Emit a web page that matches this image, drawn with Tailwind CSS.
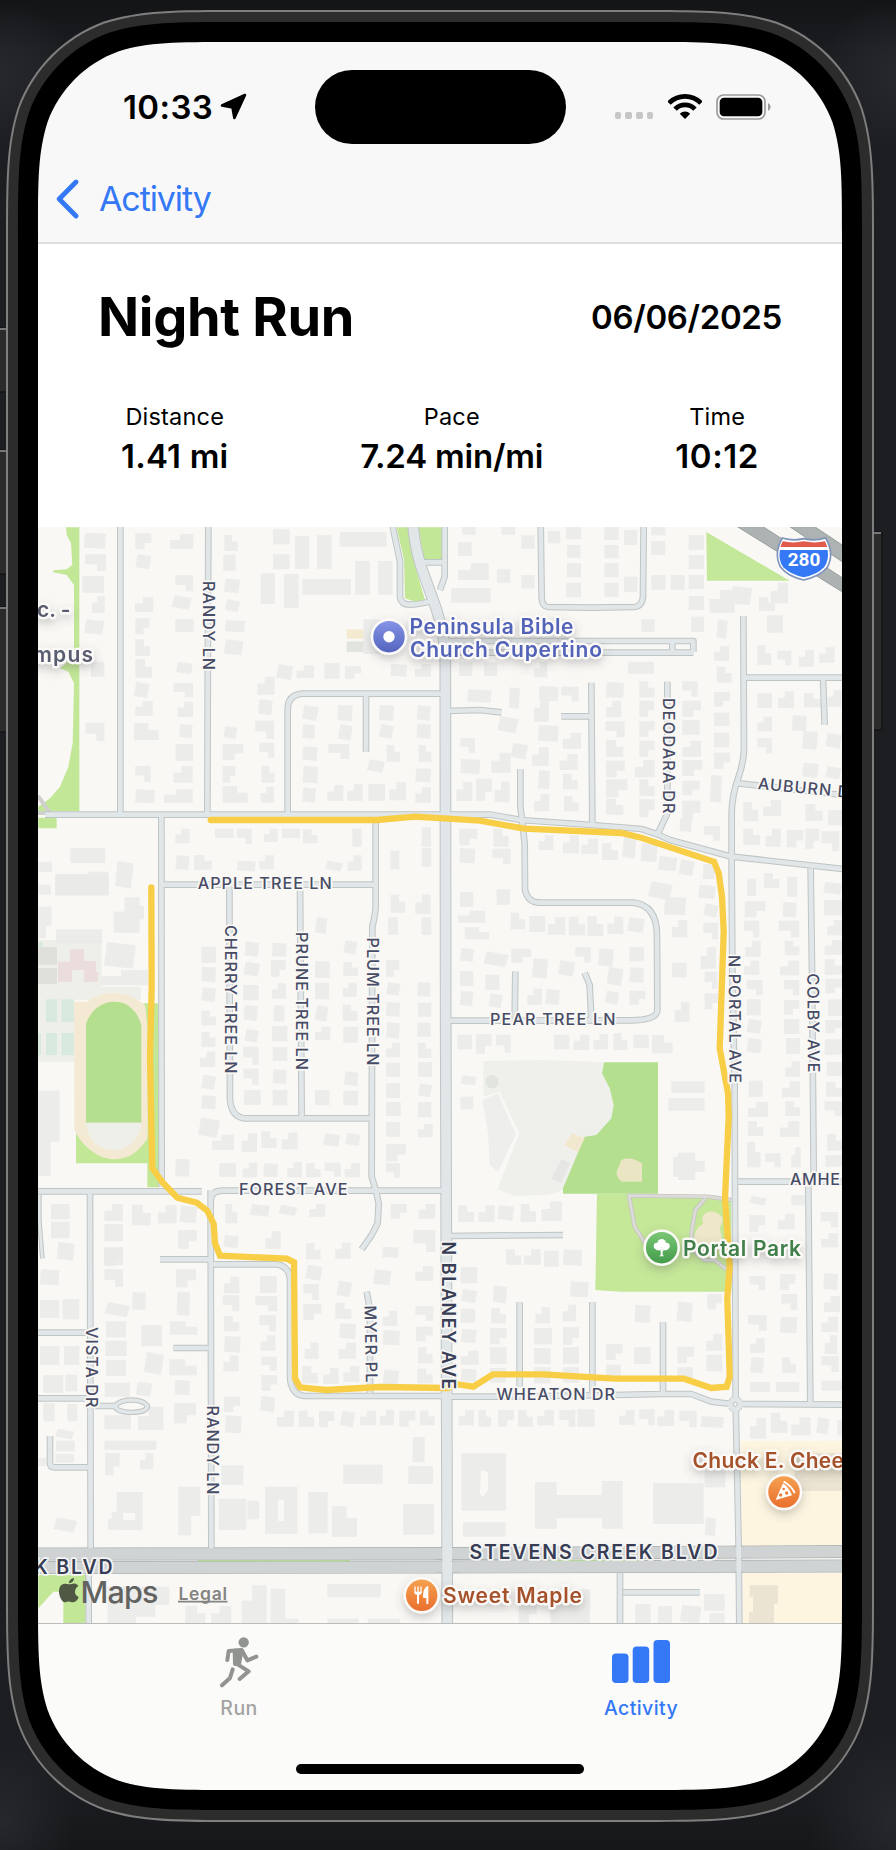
<!DOCTYPE html>
<html lang="en">
<head>
<meta charset="utf-8">
<title>Night Run</title>
<script src="https://cdn.jsdelivr.net/npm/@tailwindcss/browser@4"></script>
</head>
<body class="bg-[#1d1e22]">
<main class="relative h-[1850px] w-[896px] overflow-hidden bg-[#1d1e22] pt-[42px] pl-[38px] font-['Inter','Liberation_Sans',sans-serif] text-black">
  <svg class="absolute inset-0" width="896" height="1850" viewBox="0 0 896 1850" aria-hidden="true">
    <defs>
      <linearGradient id="edge" x1="0" y1="0" x2="0" y2="1"><stop offset="0" stop-color="#131416"/><stop offset="1" stop-color="#131416" stop-opacity="0"/></linearGradient>
      <linearGradient id="edge2" x1="0" y1="1" x2="0" y2="0"><stop offset="0" stop-color="#161719"/><stop offset="1" stop-color="#161719" stop-opacity="0"/></linearGradient>
      <radialGradient id="lit"><stop offset="0" stop-color="#27282d"/><stop offset="1" stop-color="#27282d" stop-opacity="0"/></radialGradient>
    </defs>
    <rect width="896" height="60" fill="url(#edge)"/>
    <rect y="1770" width="896" height="80" fill="url(#edge2)"/>
    <circle cx="0" cy="75" r="75" fill="url(#lit)"/><circle cx="896" cy="75" r="75" fill="url(#lit)"/>
    <circle cx="0" cy="1820" r="75" fill="url(#lit)"/><circle cx="896" cy="1820" r="90" fill="url(#lit)"/>
    <g fill="#2b2b2b" stroke="#0b0b0c">
      <rect x="-4" y="328" width="11" height="64"/><rect x="-4" y="450" width="11" height="124"/><rect x="-4" y="607" width="11" height="125"/>
      <rect x="873" y="532" width="9" height="198" rx="2"/>
    </g>
    <g fill="#777"><rect y="328" width="6" height="2"/><rect y="450" width="6" height="2"/><rect y="607" width="6" height="2"/><rect x="874" y="532" width="7" height="2"/></g>
    <path id="rim" fill="#7f7f7f"/><path id="band" fill="#2c2c2c"/>
  </svg>

  <section class="relative flex h-[1748px] w-[804px] flex-col overflow-hidden rounded-[100px] bg-white">
    <header class="h-[202px] shrink-0 border-b-2 border-[#dedede] bg-[#f8f8f8] pt-[27px]">
      <div class="flex h-[75px] items-center">
        <div class="flex w-[276.500px] items-center pl-[85px]">
          <span class="w-[97px] text-[33px] leading-[40px] font-semibold tracking-[0.4px]">10:33</span>
          <svg width="27" height="27" viewBox="0 0 27 27"><path d="M2 12.500 25 2 14.400 25 12.500 14.400Z" stroke="#000" stroke-width="2.600" stroke-linejoin="round"/></svg>
        </div>
        <div class="h-[74px] w-[251px] rounded-full bg-black"></div>
        <div class="flex flex-1 items-center pl-[49px]">
          <div class="mt-[18px] flex gap-[4px]">
            <i class="size-[6.7px] rounded-[2px] bg-[#c6c6c6]"></i><i class="size-[6.7px] rounded-[2px] bg-[#c6c6c6]"></i><i class="size-[6.7px] rounded-[2px] bg-[#c6c6c6]"></i><i class="size-[6.7px] rounded-[2px] bg-[#c6c6c6]"></i>
          </div>
          <svg class="ml-[15px]" width="34" height="25" viewBox="0 0 101 74"><path d="M3 27A66.500 66.500 0 0 1 98 27M21 45A41 41 0 0 1 80 45" fill="none" stroke="#000" stroke-width="14"/><path d="M50.500 74 35 58.500A22 22 0 0 1 66 58.500Z"/></svg>
          <svg class="ml-[14px]" width="55" height="26" viewBox="0 0 165 78"><rect x="3" y="3" width="144" height="72" rx="20" fill="none" stroke="#9a9a9a" stroke-width="5"/><rect x="11" y="11" width="128" height="56" rx="13"/><path d="M156 27q8 4 8 12t-8 12z" fill="#9a9a9a"/></svg>
        </div>
      </div>
      <div class="mt-[34px] flex h-[42px] items-center pl-[18px] text-[#3478f6]">
        <svg width="24" height="40" viewBox="0 0 24 40" fill="none" stroke="currentColor" stroke-width="4.800" stroke-linecap="round" stroke-linejoin="round"><path d="M20 3 3.200 20 20 37"/></svg>
        <span class="ml-[19px] text-[34px] leading-[42px] tracking-[-1.1px]">Activity</span>
      </div>
    </header>

    <div class="h-[283px] shrink-0 px-[60px] pt-[40px]">
      <div class="flex items-center justify-between">
        <h1 class="text-[54px] leading-[66px] font-bold tracking-[-0.3px]">Night Run</h1>
        <time class="text-[33px] leading-[66px] font-semibold tracking-[-0.35px]">06/06/2025</time>
      </div>
      <dl class="mt-[51px] flex justify-between px-[23px] text-center">
        <div><dt class="text-[23.500px] leading-[32px] tracking-[0.2px]">Distance</dt><dd class="mt-px text-[33px] leading-[44px] font-semibold tracking-[0.2px]">1.41 mi</dd></div>
        <div><dt class="text-[23.500px] leading-[32px] tracking-[0.2px]">Pace</dt><dd class="mt-px text-[33px] leading-[44px] font-semibold tracking-[-0.2px]">7.24 min/mi</dd></div>
        <div><dt class="text-[23.500px] leading-[32px] tracking-[0.2px]">Time</dt><dd class="mt-px text-[33px] leading-[44px] font-semibold tracking-[0.6px]">10:12</dd></div>
      </dl>
    </div>

    <svg class="block shrink-0" width="804" height="1096" viewBox="38 527 804 1096" font-family="Inter, 'Liberation Sans', sans-serif">
      <defs>
        <linearGradient id="blue" x1="0" y1="0" x2="0" y2="1"><stop stop-color="#8796e8"/><stop offset="1" stop-color="#5262bd"/></linearGradient>
        <linearGradient id="green" x1="0" y1="0" x2="0" y2="1"><stop stop-color="#7cc878"/><stop offset="1" stop-color="#419a48"/></linearGradient>
        <linearGradient id="orange" x1="0" y1="0" x2="0" y2="1"><stop stop-color="#f5a351"/><stop offset="1" stop-color="#e96d2c"/></linearGradient>
        <filter id="soft" x="-50%" y="-50%" width="200%" height="200%"><feDropShadow dx="0" dy="4" stdDeviation="5" flood-color="#555" flood-opacity=".3"/></filter>
      </defs>
      <rect x="38" y="527" width="804" height="1096" fill="#f9f8f5"/>

      <!-- land cover -->
      <g transform="translate(0 510) scale(.33333)" fill="#c2e797">
        <path d="M198 52H238V903H115V890L150 865 180 830 205 770 218 700 222 520 205 485 180 475 222 440V225L200 195 160 187V181L200 178 217 165 213 100 200 75ZM115 923H170V955H115ZM1190 52H1225L1240 150 1275 270 1245 275 1215 265 1212 150ZM1255 52H1330V148H1272Z"/>
        <path d="M1040 358h50v28h-50z" fill="#f3ead0"/><path d="M1040 394h50v32h-50z" fill="#e2e4de"/>
      </g>
      <path transform="translate(448 510) scale(.33333)" fill="#c4e89a" d="M775 66 1025 212H777Z"/>
      <g transform="translate(0 870) scale(.33333)">
        <path fill="#efefea" d="M115 210H305V350H423V390H222V575H115Z"/>
        <path fill="#d8eade" d="M138 388h33v68h-33zM184 388h38v68h-38zM138 489h33v67h-33zM184 489h38v67h-38zM115 489h8v67h-8zM115 216h12v14h-12z"/>
        <path fill="#dfdfdc" d="M115 231h56v53h-56zM115 294h56v48h-56z"/>
        <path fill="#eadddc" d="M210 238h42v35h36v33h6v30h-42v-36h-36v36h-42v-61h36z"/>
        <path fill="#c2e797" d="M430 400H475L478 952H442V880H228V780H440Z"/>
        <path fill="#f4ead3" d="M222 395H262C290 376 310 369 345 369S400 380 435 405L443 470V805C420 840 390 868 345 868S250 835 223 780Z"/>
        <path fill="#b3df8f" d="M258 758V462C270 425 300 395 343 395S412 425 424 465V758Z"/>
        <path fill="#efefea" d="M258 758H424C420 805 390 840 342 840S264 810 258 758Z"/>
      </g>
      <g transform="translate(448 870) scale(.33333)">
        <path fill="#efefeb" d="M106 573 290 570 468 577 462 610 485 655 497 705 490 745 445 795 410 800 345 960 300 974 200 978 148 958 214 790 155 665 106 680Z"/>
        <path fill="#eeeeec" d="M103 690 150 670 178 735 205 792 150 905 125 885 120 790Z"/>
        <circle cx="132" cy="635" r="20" fill="#e2e4de"/>
        <path fill="#b3df8f" d="M468 577H630V971H345V955L410 800 445 795 490 745 497 705 485 655 462 610Z"/>
        <path fill="#f2e8d0" d="M372 790 410 804 390 846 349 826Z"/><path fill="#e6e6e4" d="M340 868 366 880 340 938 310 926Z"/>
        <path fill="#eae5c3" d="M520 870Q550 858 582 880V935H520Q500 915 508 900Z"/>
        <path fill="#c4e798" d="M447 972H630L850 988V1265L520 1265 442 1260Z"/>
        <path fill="#efe7c9" d="M762 1045Q770 1020 800 1026 830 1035 822 1062 810 1070 822 1100V1140H740Q730 1080 765 1062Z"/>
      </g>
      <path transform="translate(0 1230) scale(.33333)" fill="#c2e797" d="M115 1035H258L256 1182H190V1085H160L115 1135Z"/>
      <g transform="translate(448 1230) scale(.33333)"><path fill="#fdf5e0" d="M878 632H1182V948H882ZM885 1030H1182V1182H885Z"/><path fill="#ece4d2" d="M1040 670H1182V783H1040ZM905 1066H990V1120L978 1122V1182H903V1145H915V1100H905Z"/></g>

      <!-- buildings -->
      <g id="houses" fill="#e9e9e8" fill-opacity=".82"></g>
      <path fill="#f9f8f5" d="M481 1470 488 1472V1490L483 1497 480 1494ZM278 1500h6v21h-6zM123 1513h12v7h-12z"/>

      <!-- park paths -->
      <g transform="translate(448 870) scale(.33333)" fill="none" stroke-linejoin="round">
        <path stroke="#c5c5c2" stroke-width="13" d="M850 990 780 980 543 977 560 1070 595 1125M772 985 742 1020 730 1090 735 1140 770 1170 800 1170 835 1198"/>
        <path stroke="#dcdbd8" stroke-width="8" d="M850 990 780 980 543 977 560 1070 595 1125M772 985 742 1020 730 1090 735 1140 770 1170 800 1170 835 1198"/>
      </g>
      <path d="M38 796 50 813M38 813H50" stroke="#cfd0ce" stroke-width="4"/>

      <!-- streets -->
      <g id="streets" fill="none" stroke-linejoin="round"></g>
      <circle cx="735.300" cy="1404.300" r="7.500" fill="#e1e6e8"/>
      <path d="M728.800 1400.500a7.500 7.500 0 0 1 3.200-3.200M738.600 1397.300a7.500 7.500 0 0 1 3.200 3.200M728.800 1408.100a7.500 7.500 0 0 0 3.200 3.200M738.600 1411.300a7.500 7.500 0 0 0 3.200-3.200" fill="none" stroke="#c2c7c7"/>
      <circle cx="735.300" cy="1404.300" r="2" fill="#f9f8f5" stroke="#b9bebe"/>
      <g transform="translate(448 510) scale(.33333)" fill="#adb3b3" stroke="#999f9f" stroke-width="3">
        <path d="M868 50H945L1190 208V250ZM1025 50H1100L1190 110V160Z"/>
      </g>

      <!-- recorded route -->
      <path fill="none" stroke="#f8ce46" stroke-width="6.300" stroke-linecap="round" stroke-linejoin="miter" d="M210.700 820H376.700L415 816.700 448 818.700 479.700 820.700 524.700 828.700 621.300 833 641.300 837.700 714 861.700 718.700 873.300 722 896.700 723.700 931.700 719.700 1048.300 728 1093.300 728.700 1116.700 725 1198.300 729.700 1266.700 727.300 1298.300 729.700 1376.700 726.700 1386.700 711.300 1388 684 1378.700H614.700L543 1374.300H493L473.300 1386.700 455 1384 448 1388 380 1387 326 1390 300 1387.300 295 1378.300 294 1262.300 286.700 1258.700 220 1255.700 215 1243.300 213.700 1224 207.300 1210.700 196.700 1202.700 177.300 1197.700 163.300 1183.300 152.300 1168.300 150 1056.700 151.700 986.700 151.300 887.300"/>

      <!-- street names -->
      <g fill="#474c66" font-size="16.200" font-weight="450" stroke="#f9f8f5" stroke-width="3.500" paint-order="stroke" stroke-linejoin="round">
        <text transform="translate(203.300 581) rotate(90)" textLength="89">RANDY LN</text>
        <text x="197.700" y="889.300" textLength="134">APPLE TREE LN</text>
        <text transform="translate(225 925) rotate(90)" textLength="148.500">CHERRY TREE LN</text>
        <text transform="translate(296 932) rotate(90)" textLength="138">PRUNE TREE LN</text>
        <text transform="translate(367 937.500) rotate(90)" textLength="128">PLUM TREE LN</text>
        <text x="239" y="1195.300" textLength="108.500">FOREST AVE</text>
        <text transform="translate(663 698) rotate(90)" textLength="115.500">DEODARA DR</text>
        <text transform="translate(757.500 789) rotate(5.500)" textLength="103">AUBURN DR</text>
        <text transform="translate(728.500 955) rotate(89.500)" textLength="128">N PORTAL AVE</text>
        <text transform="translate(807.200 973.500) rotate(89.500)" textLength="99">COLBY AVE</text>
        <text x="490" y="1024.700" textLength="125.500">PEAR TREE LN</text>
        <text x="790" y="1185.300" textLength="50">AMHE</text>
        <text transform="translate(86 1327) rotate(90)" textLength="80.500">VISTA DR</text>
        <text transform="translate(364.500 1305.500) rotate(89)" textLength="77">MYER PL</text>
        <text transform="translate(206.700 1405.500) rotate(90)" textLength="89">RANDY LN</text>
        <text x="496.500" y="1400.300" textLength="118.500">WHEATON DR</text>
      </g>
      <g fill="#383d56" font-weight="600" stroke="#f5f5f3" stroke-width="3.500" paint-order="stroke" stroke-linejoin="round">
        <text transform="translate(442.300 1241.500) rotate(90)" textLength="148" font-size="18">N BLANEY AVE</text>
        <text x="469.500" y="1558.500" textLength="248" font-size="19.500">STEVENS CREEK BLVD</text>
        <text x="34" y="1573.500" textLength="78.500" font-size="19.500">K BLVD</text>
      </g>

      <!-- places -->
      <g font-weight="600" font-size="21" stroke="#fbfaf8" stroke-width="4.500" paint-order="stroke" stroke-linejoin="round" filter="url(#soft)">
        <g fill="#5264b8"><text x="409.500" y="634" textLength="164">Peninsula Bible</text><text x="410" y="656.700" textLength="192">Church Cupertino</text></g>
        <g fill="#5a5c70"><text x="37" y="616.700" textLength="33.500">c. -</text><text x="33" y="661.700" textLength="60">mpus</text></g>
        <text x="683" y="1256" textLength="118" fill="#3f7f49">Portal Park</text>
        <text x="692.500" y="1467.700" textLength="176" fill="#a5512a">Chuck E. Cheese</text>
        <text x="443" y="1602.700" textLength="139" fill="#a5512a">Sweet Maple</text>
      </g>
      <g stroke="#fbfaf8" stroke-width="2.500" filter="url(#soft)">
        <circle cx="389" cy="636.700" r="17" fill="url(#blue)"/>
        <circle cx="661.700" cy="1247.700" r="17" fill="url(#green)"/>
        <circle cx="784" cy="1492" r="17" fill="url(#orange)"/>
        <circle cx="421.700" cy="1595.300" r="17" fill="url(#orange)"/>
      </g>
      <circle cx="389" cy="636.700" r="5.700" fill="#fff"/>
      <g transform="translate(661.700 1247.700) scale(.33333)" fill="#fff"><circle cx="0" cy="-13" r="13"/><circle cx="-14" cy="-5" r="10"/><circle cx="14" cy="-5" r="10"/><ellipse cx="-10" cy="2" rx="9" ry="6"/><ellipse cx="10" cy="2" rx="9" ry="6"/><path d="M-2.500 0H2.500L3 22 8 26H-8L-3 22Z"/><path d="M0 12 9 4M0 12-9 4" stroke="#fff" stroke-width="2.500"/></g>
      <g transform="translate(784 1492) scale(.33333)"><path fill="#fff" d="M-3-26-24 22Q-22 26-18 22L24 10Q14-14-3-26Z"/><path fill="none" stroke="#fff" stroke-width="6" stroke-linecap="round" d="M1-30Q22-18 31 1"/><circle cx="-10" cy="9" r="5" fill="#ee7d36"/><circle cx="8" cy="3" r="5" fill="#ee7d36"/><circle cx="-1" cy="-9" r="4" fill="#ee7d36"/></g>
      <g transform="translate(421.700 1595.300) scale(.33333)" fill="none" stroke="#fff" stroke-linecap="round"><path stroke-width="4" d="M-20-25V-9M-11-25V-9M-2-25V-9"/><path d="M-20-9Q-20-3-11-3T-2-9Z" fill="#fff" stroke-width="4"/><path stroke-width="6" d="M-11-2V23"/><path d="M17-25V24M17-24Q6-18 7 5H17Z" fill="#fff" stroke-width="6" stroke-linejoin="round"/></g>

      <!-- interstate shield -->
      <g transform="translate(448 510) scale(.33333)">
        <path d="M1003 84Q1035 94 1067 86 1100 94 1133 84 1160 130 1138 172 1115 200 1067 210 1020 200 998 172 976 130 1003 84Z" fill="#fff" stroke="#7f92ba" stroke-width="5"/>
        <path d="M1004 94Q1035 101 1067 94 1100 101 1131 94L1138 111H997Z" fill="#e15b4d"/>
        <path d="M996 120H1139Q1144 150 1128 172 1108 194 1067 202 1028 194 1006 172 990 150 996 120Z" fill="#3478f6"/>
        <text x="1068" y="169" text-anchor="middle" font-size="57" font-weight="700" fill="#fff" font-family="Roboto,sans-serif">280</text>
      </g>

      <!-- map attribution -->
      <g transform="translate(0 1230) scale(.33333)" fill="#4f5843"><path d="M207 1063C216 1063 225 1055 235 1068 221 1078 222 1095 236 1101 230 1116 222 1117 215 1117 208 1114 203 1114 196 1117 183 1119 168 1080 184 1065 194 1058 200 1062 207 1063Z"/><path d="M206 1060Q208 1046 222 1044 222 1058 206 1060Z"/></g>
      <text x="80.500" y="1602.700" font-size="30.500" font-weight="500" fill="#626260" textLength="78">Maps</text>
      <text x="178.500" y="1599.500" font-size="17.500" font-weight="600" fill="#848482" textLength="48.500">Legal</text><path d="M178 1601.700H227.500" stroke="#848482" stroke-width="1.700"/>
    </svg>

    <nav class="relative flex h-[167px] shrink-0 border-t border-[#bcbcba] bg-[#fbfbf9]">
      <div class="flex flex-1 flex-col items-center pt-[12px] text-[#929490]">
        <svg width="40" height="52" viewBox="656 136 120 156" fill="none" stroke="currentColor" stroke-width="12" stroke-linecap="round" stroke-linejoin="round"><circle cx="730" cy="155" r="15.500" fill="currentColor" stroke="none"/><path d="M681 208 685 181 724 178 741 209 768 198M713 222 745 242 718 265M697 236 689 262 665 284"/><path d="M703 180H724L716 220H704Z" fill="currentColor"/></svg>
        <span class="mt-[8px] text-[19.500px] leading-[24px] font-medium tracking-[0.4px] text-[#a3a3a2]">Run</span>
      </div>
      <div class="flex flex-1 flex-col items-center pt-[12px] text-[#3478f6]">
        <svg width="60" height="52" viewBox="0 0 60 52" fill="currentColor"><rect x="1" y="17.500" width="16.500" height="29.500" rx="4"/><rect x="21.700" y="10.500" width="16.500" height="36.500" rx="4"/><rect x="42.500" y="4" width="16.500" height="43" rx="4"/></svg>
        <span class="mt-[8px] text-[19.500px] leading-[24px] font-medium tracking-[0.4px]">Activity</span>
      </div>
      <div class="absolute bottom-[16px] left-[258px] h-[10px] w-[288px] rounded-full bg-black"></div>
    </nav>
  </section>
  <svg class="pointer-events-none absolute inset-0" width="896" height="1850" viewBox="0 0 896 1850" aria-hidden="true"><path id="bezel" fill="#000" fill-rule="evenodd"/></svg>
</main>
<script>
// Rounded rectangle with continuous-curvature corners.
function squircle(x, y, w, h, r) {
  const a = 1.5287 * r, b = 1.0885 * r, c = .8684 * r, d = .6315 * r, e = .0749 * r, f = .3728 * r, g = .1691 * r;
  const X = x + w, Y = y + h;
  return `M${x + a} ${y}H${X - a}C${X - b} ${y} ${X - c} ${y} ${X - d} ${y + e}C${X - f} ${y + g} ${X - g} ${y + f} ${X - e} ${y + d}C${X} ${y + c} ${X} ${y + b} ${X} ${y + a}V${Y - a}` +
    `C${X} ${Y - b} ${X} ${Y - c} ${X - e} ${Y - d}C${X - g} ${Y - f} ${X - f} ${Y - g} ${X - d} ${Y - e}C${X - c} ${Y} ${X - b} ${Y} ${X - a} ${Y}H${x + a}` +
    `C${x + b} ${Y} ${x + c} ${Y} ${x + d} ${Y - e}C${x + f} ${Y - g} ${x + g} ${Y - f} ${x + e} ${Y - d}C${x} ${Y - c} ${x} ${Y - b} ${x} ${Y - a}V${y + a}` +
    `C${x} ${y + b} ${x} ${y + c} ${x + e} ${y + d}C${x + g} ${y + f} ${x + f} ${y + g} ${x + d} ${y + e}C${x + c} ${y} ${x + b} ${y} ${x + a} ${y}Z`;
}
const $ = id => document.getElementById(id);
$('rim').setAttribute('d', squircle(6, 10, 868, 1812, 155));
$('band').setAttribute('d', squircle(8, 12, 864, 1808, 153));
$('bezel').setAttribute('d', squircle(18, 22, 844, 1788, 144) + squircle(38, 42, 804, 1748, 127));

// Street centre lines per map tile: [tile x, tile y, total width, path], three units per pixel.
const streets = [
  [0, 510, 20, 'M361 40V910M625 40 622 910M484 915 485 2030M484 1124H1127M688 1124 690 1770Q695 1822 735 1825H1117M900 1124 905 1825M1127 925V1185Q1127 1210 1117 1250L1115 2000 1128 2042 1136 2080 1133 2140 1115 2175 1085 2218M863 910V600Q863 553 910 551H1330M1098 551V725'],
  [0, 510, 20, 'M135 914H1344L1474 914 1562 930 1777 945 1924 957 1970 972 2010 990 2195 1040 2540 1078'],
  [0, 510, 20, 'M1176 40 1200 155V262Q1204 284 1230 284 1255 284 1290 274M1260 157H1334M1334 40V200L1320 240'],
  [448, 510, 20, 'M278 40 281 265Q283 290 300 291L430 293 560 291Q582 288 585 262L587 40M0 393H736V425M0 428H736M673 393V428M0 603 95 600 160 607M430 518 433 940M340 619H430M217 777V890L222 930 230 1000 231 1140Q240 1178 275 1178H555Q628 1185 627 1280L628 1500Q628 1530 550 1531L0 1532M658 515V910L630 970M886 318 888 720Q886 760 872 800 850 860 851 920V1080L853 1380 860 1730 863 2683 872 3110 874 3350M886 503H1200M1125 503 1130 645M872 820 1200 857M1088 1075 1092 1380 1097 1990M1081 2025 1087 2683M870 2015H1200M202 1385 200 1530M410 1388 425 1425 430 1530M0 2178 345 2175'],
  [0, 1230, 20, 'M115-116H605M632 60V-90Q634-118 668-118H1330M270-115 272 955M632-120 634 955M480 88H630M640 103H830Q868 108 870 150V440Q872 495 915 498H1330M520 354H625M100 308H265M100 505H265M285 528H345M150 618V700Q150 712 165 712H270M1100 185 1110 240V490M266 1030V1200'],
  [0, 1230, 16, 'M345 528Q360 510 395 510T443 528Q440 547 395 547T345 528Z'],
  [0, 1230, 14, 'M118-105V-30L127 85'],
  [448, 1230, 20, 'M215 217V470M433 217V490M645 277V485M0 500H150L500 495 640 492H730L790 515 850 522 1200 524M516 1030V1200M526 1087H755'],
  [0, 510, 35, 'M1239 40Q1243 110 1265 175L1310 300Q1336 380 1336 460L1337 1500 1342 3350'],
];
const boulevard = 'M38 1554 448 1553.500 842 1551.500M38 1567.500 448 1567 842 1566';
const NS = 'http://www.w3.org/2000/svg';
function add(parent, d, stroke, width, t) {
  const p = document.createElementNS(NS, 'path');
  p.setAttribute('d', d); p.setAttribute('stroke', stroke); p.setAttribute('stroke-width', width);
  if (t) p.setAttribute('transform', t);
  parent.append(p);
}
const tf = (x, y) => `translate(${x} ${y}) scale(.33333)`;
streets.forEach(([x, y, w, d]) => add($('streets'), d, '#bfc4c4', w, tf(x, y)));
add($('streets'), boulevard, '#b1b6b6', 13);
add($('streets'), boulevard, '#cfd3d4', 11);
add($('streets'), 'M198 1560.700H350M550 1560.500H640', '#b5d69a', 1.5);
streets.forEach(([x, y, w, d]) => add($('streets'), d, '#e1e6e8', w - 6, tf(x, y)));
add($('streets'), 'M38 1554H435M460 1553.500 733 1552M745 1552 842 1551.500M38 1567.500H435M460 1567 733 1566.500M745 1566.500 842 1566', '#cfd3d4', 11);

// Building footprints: x,y,w,h and an optional corner cut (1 TL, 2 TR, 3 BR, 4 BL, 5 skewed).
const houses = [
  [0, 510, `252,68,66,48,5 255,133,63,50,4 247,198,65,50 276,258,38,50,1 253,328,60,46,5 273,455,40,45 257,638,56,55,4
    406,70,48,48,3 406,132,48,46,5 510,72,70,45,1 405,262,55,44,1 406,325,42,48,3 406,388,44,50,2 406,448,50,55,2 402,515,46,50,5 406,573,52,44,1 402,640,74,50,2 406,768,46,48,4 405,838,60,42,5
    526,196,53,48,4 515,256,60,43,5 526,328,55,38 528,456,50,36,5 521,520,58,42,4 533,575,46,46,1 538,642,40,43,5 527,702,52,50 520,768,58,50,1 492,838,86,40,1
    673,75,40,48,2 670,134,37,48 672,205,48,45,5 675,268,45,38,5 675,330,60,37,5 672,388,58,48,5 670,648,42,40,5 668,702,62,48,3 668,768,38,50,3 668,828,75,50,2
    819,58,50,45 819,133,50,45 885,78,43,98 951,76,44,100 1019,66,141,44 782,190,43,92 852,192,44,102 907,207,146,47 1066,153,44,101 1134,153,44,101 1090,328,50,104
    828,462,52,48,5 890,466,52,38,1 973,460,46,46 1035,468,48,38,3 772,500,52,54,1 774,568,44,48,5 766,632,56,54,4 778,698,45,46,4 784,768,40,50,2 782,830,40,48,1 1171,462,50,38,5 1245,462,48,38,1
    906,585,50,48,5 1012,585,46,48,5 906,642,40,45,5 1014,642,44,50,5 1137,585,45,47,5 1250,585,43,47,5 1137,642,44,45,5 1250,642,43,44,5 906,708,48,45,5 985,702,63,44,4 1160,705,40,50,2 1256,705,38,50,2 1101,748,54,40,5 908,768,46,52,5 906,832,42,46,5 982,826,48,46,1 1042,822,46,50,1 1105,822,50,50 1168,816,50,55,1 1246,775,47,42,5 1246,832,47,46,1
    526,956,43,44,1 645,956,56,28 711,956,44,46,4 792,956,41,40,1 846,956,54,28 909,958,44,42,2 1057,956,28,54 1265,952,28,58 526,1035,43,46,5 582,1035,54,44,2 711,1052,56,32,5 778,1036,44,42,1 975,1052,54,32,5 1043,1036,42,46,1 1171,1022,27,56 1265,1014,29,56
    211,1015,105,44 115,1055,41,30 115,1124,38,30 166,1092,160,64 264,1085,62,20 345,1052,56,84,5`],
  [448, 510, `43,50,40,24 161,50,40,24 30,96,41,42 220,76,40,40 10,234,118,44 30,160,92,50,1 147,178,40,40 220,195,40,40 299,64,38,36 354,52,46,36 357,105,40,38 357,160,42,42 354,218,45,44 469,52,43,38 469,105,43,40 469,160,43,42 469,218,43,42 528,60,40,45 528,200,40,46 610,52,43,24 610,93,42,42 610,195,43,44 668,195,42,44 722,76,46,43 722,135,46,42 722,195,46,42 722,258,46,42
    785,240,75,68,1 848,228,64,58,5 933,262,48,40,2 968,218,52,62,1 957,316,48,52 580,328,40,38 730,320,38,46 540,455,78,36 805,328,34,58,5 798,408,45,44,1 806,470,45,48,2 928,406,42,58,2 988,422,42,44,4 1052,420,46,50,1 1114,412,46,46,1
    33,456,40,42 108,456,40,42 258,456,40,46,1 57,538,74,40,5 182,532,34,64,5 258,565,44,70,1 272,528,60,46,5 340,530,52,44,4 148,618,64,52,5 270,645,62,50,5 345,668,54,48,1 37,684,44,44,4 37,746,60,46,5 130,728,58,60,1 188,698,52,50,5 252,712,50,56,1 25,815,48,58,1 84,806,48,66,3 140,815,45,62,1 270,780,36,58,5 258,852,46,52,1
    335,732,54,48,1 345,792,44,46,2 348,858,44,46,2 474,516,54,48,5 474,572,46,50,1 472,634,58,48,4 474,690,52,50,2 474,752,56,50,3 474,808,64,54,3 474,866,52,48,2 574,514,46,48,2 574,572,44,48,3 574,634,46,46,3 574,692,46,48,3 560,750,60,52,1 574,808,46,50,2 574,868,46,54,3 703,514,46,46,4 703,572,56,48,3 703,630,52,44 703,692,56,48,1 703,750,60,48,3 703,812,52,44,3 703,872,54,60,3
    798,546,48,44,3 798,608,46,40 798,668,46,44 798,728,48,48,3 786,794,36,84,5 768,948,48,44,4 695,925,36,40,5
    928,550,44,44 990,544,48,50,1 1068,550,50,42,2 928,620,44,44,1 928,684,44,46,4 1032,616,44,48,5 1062,662,48,58,5 1132,668,50,48,5 1140,540,40,50,1 1062,758,50,46,5 1132,768,48,40,5 886,876,44,58,2 946,870,54,48,1 1072,882,52,50,2 1140,900,42,46 886,956,50,48,2 952,956,46,54,1 1016,960,50,52,3 1072,956,42,60,3 1120,964,54,60,4
    34,956,54,50,3 136,956,46,54,2 272,976,44,44,1 34,1014,48,46,5 134,1016,54,46,4 345,976,48,54,1 400,986,50,46,1 462,1000,48,50,2 522,980,44,66,5 578,1000,50,56,5 630,1038,58,46,5 692,1048,48,50,5 764,1062,38,46,5`],
  [0, 870, `115,110,40,95,3 341,82,78,106,1 377,108,55,40 168,178,138,42 312,216,96,80,5 304,300,140,46,1 166,14,160,62 115,662,64,255,3
    604,230,44,48 604,290,44,46,5 604,352,44,44,5 604,422,44,44,2 604,486,42,44,2 600,545,46,46,1 604,614,44,46,5 604,676,44,42,5
    733,214,45,46,5 730,274,50,46,5 730,345,46,46 730,405,44,48,5 733,476,44,42,5 730,530,46,54,4 730,596,46,48,4 732,660,50,44
    816,218,44,42,5 813,270,44,50,3 816,340,42,46,1 820,405,34,50,5 816,468,46,46 818,532,44,40 818,598,42,44,5 818,660,44,46
    945,140,37,52,5 945,274,44,50 945,338,42,50 945,405,40,50,5 945,470,46,40,1 945,660,43,46 1030,210,42,44,5 1030,276,44,42,2 1028,338,42,42,1 1028,404,44,48,2 1030,470,44,48 1032,604,44,44,5 1030,662,44,44
    1172,74,44,54,2 1246,74,46,58,1 1164,142,30,52 1264,142,30,52 1158,270,40,50,3 1158,336,44,42,5 1158,396,42,44,5 1158,456,42,50,5 1158,518,42,44,1 1158,578,42,42 1158,640,42,44 1158,696,44,42 1158,756,42,44 1158,822,60,52,3 1158,880,42,44,4
    1252,336,40,44,5 1254,398,40,42 1252,458,40,42 1254,518,40,46,2 1254,576,42,44 1254,640,42,42,5 1254,696,40,46 1254,762,44,40,1
    594,742,66,62,5 636,794,66,46,1 725,790,46,56,1 784,784,46,50,2 845,788,48,50,1 970,790,50,40,5 1036,788,46,40,5 525,866,44,54,5 658,880,50,40 728,878,44,44,1 790,880,44,42,5 862,876,44,46,1 918,880,44,42,2 974,878,48,42,4 1034,880,46,42,1
    153,1002,56,46 153,1055,56,50 170,1116,54,56,5 313,1002,56,50,1 313,1062,56,52 313,1132,56,56,3 396,1004,56,62,2 474,1006,56,54,1 538,1006,54,54,5 534,1080,56,56,3 676,1002,36,58,2 750,1002,60,38,5 836,1004,56,34,5 928,1002,48,38,1 670,1094,46,40,5 796,1084,46,52,1 1172,1002,48,44,3 1256,1002,50,44,1 1240,1080,66,66,4 1146,1130,50,34,5 1006,1118,46,48,1 918,1120,44,48,2`],
  [448, 870, `36,66,40,44 146,58,40,46 30,122,82,36,1 50,172,74,36,2 188,128,44,50,2 244,138,48,48 300,142,52,52,1 362,140,50,56,2 418,138,48,60,2 478,140,48,52,1 538,142,52,46,5 600,34,74,56,5 648,80,66,56,5 672,150,46,52,1 672,278,44,44 680,396,44,60,1 750,44,54,44,5 766,100,46,42,5 766,158,44,50,4 758,232,46,64,1 770,305,38,52,4 770,370,40,48,3
    36,234,42,42,5 106,244,76,48,5 190,236,60,42,3 252,264,48,62,5 330,270,52,50,5 382,232,46,46,4 450,234,48,56,5 544,232,44,42 36,304,40,44 112,314,42,46 476,290,50,58,5 544,292,44,46,5 36,362,40,46,5 122,370,42,44,5 238,356,44,48,1 292,356,44,50,5 470,362,44,42,5 544,362,48,42,3
    28,494,44,44 84,492,46,60,3 144,494,44,54,4 318,494,46,44 376,494,48,46,1 436,492,44,46,1 496,490,42,50,2 556,494,46,40 612,496,62,54,2 38,616,48,30,5 38,680,38,38 670,634,100,34 661,684,109,38 690,848,52,82 675,860,17,60 742,873,28,32
    30,1006,48,50,2 92,1006,48,50,1 148,1006,50,46,5 218,1002,46,54,2 280,994,62,58,1
    898,26,26,52 948,10,46,44,2 1018,20,30,60 1126,36,56,38,5 890,94,62,48,3 1004,96,42,46,5 888,152,46,50,4 992,152,62,50,4 892,212,46,48,1 1010,212,44,44,2 888,272,46,42,1 996,272,58,44,1 896,330,48,46,4 1008,330,46,46,4 896,388,42,48 1008,390,46,44,3 896,446,46,46,5 1008,448,46,44 896,504,46,46,5 1014,504,42,48 1012,574,44,46,1 902,632,42,48 1002,634,54,48,1 900,696,60,44,1 1012,694,44,44,2 900,754,46,44,2 996,754,58,46,1 898,816,40,76,2 952,850,46,42,4 1030,832,28,60,1
    1128,90,54,46 1138,150,44,46,1 1130,210,52,44,1 1130,268,52,46,2 1132,326,50,44,3 1140,388,42,50 1132,450,50,40,3 1130,508,52,46 1136,576,46,42 1134,636,48,44,2 1130,694,52,44,4 1138,792,44,50,2 1132,856,50,34 904,978,52,28,5 1030,976,40,30 904,1036,48,50,3 990,1032,50,46,1 1118,1026,52,46,4 1120,1090,50,42,1`],
  [0, 1230, `120,118,58,48,5 120,210,58,54 188,208,50,60 313,53,56,52 313,118,56,52,4 313,216,78,46,5 396,186,42,54,5 424,285,62,64 432,366,60,68,5 318,274,60,48 316,332,64,46 318,390,60,48 314,458,76,42 408,456,48,44,5 120,348,58,56 192,348,46,56 130,436,60,52 196,434,36,50 130,520,34,54 202,522,30,52 165,596,58,32,5 168,632,56,32 166,672,56,26 115,684,24,24
    313,556,80,42 414,530,76,70,1 313,632,156,28 315,670,44,66,3 420,670,40,48,1 510,274,82,40,2 530,185,40,72,5 528,118,60,54,3 508,388,82,48,2 524,450,46,46,5 522,520,66,60,3 350,786,78,114 324,845,26,54,1 535,770,66,146,3 160,862,72,46,5
    672,140,46,50,1 668,196,50,48,4 672,258,46,46,2 672,318,50,50,5 670,376,46,48,1 672,500,48,46,3 675,556,50,54,5 780,138,50,50 766,198,66,46,4 778,256,50,48,4 782,316,44,46,1 784,380,46,42,4 784,436,48,46,3 780,498,46,48,5
    830,542,52,48,1 896,542,46,48,2 957,544,46,48,3 1020,542,46,50,5 1080,542,48,44,1 1140,540,42,46,1 1198,542,48,48,3 1260,542,44,44,2 664,706,66,58 656,806,83,94 742,812,36,56 795,770,97,142 925,786,58,124 996,828,75,92,2 1210,822,92,92 1225,708,74,54 1238,621,36,76 1030,704,118,57
    916,104,52,48,5 910,162,46,48,4 910,222,54,48,3 906,408,48,52,2 914,338,42,48,1 970,414,46,48,1 1030,408,48,48,1 1018,280,50,46,5 1006,218,48,48,2 1010,152,46,50,5 1016,338,52,48,1 1120,118,54,48,5 1148,242,44,46,1 1148,300,52,46,5 1148,418,50,48,5 1246,108,54,44,1 1246,228,54,44,4 1248,290,50,44,3 1254,352,44,48,2 1252,416,46,44,2
    323,1070,85,112 408,1070,100,90,3 556,1128,60,54,2 634,1128,60,54,1 725,1066,75,116,1 812,1076,44,106 856,1166,40,16 982,1062,160,40 982,1166,94,16 1103,1166,96,16`],
  [448, 1230, `174,58,46,46,2 228,58,50,46,1 288,62,44,48 345,58,58,50,5 38,112,50,48 38,176,50,44,5 38,236,44,42 38,296,48,44,5 38,362,54,42,1 38,416,48,40,5 134,166,44,54,5 130,234,44,46,2 126,295,50,48,3 126,352,50,50 126,414,48,44
    366,154,56,48,5 344,224,40,50,1 262,232,44,48,1 258,295,54,48 258,354,50,48 258,412,50,48 345,292,48,52,3 345,352,48,50 345,412,48,46 474,342,50,48,3 474,404,44,42 558,352,50,50 560,224,48,54,5 686,214,48,62,5 688,350,50,50,3 688,412,46,40 778,192,44,46,3 775,312,48,50,1 775,374,48,50
    32,540,46,46,1 92,540,38,50,2 150,540,48,50,3 210,540,44,50,2 268,540,50,46,1 334,540,48,50,4 388,538,52,52 514,540,46,44,1 574,538,46,48,4 628,540,50,48,1 694,542,52,50,4 758,558,70,36,5
    40,670,134,172 45,877,128,43 261,756,65,140 462,753,62,143 326,795,136,70 615,760,152,122 770,862,34,56,5 770,722,62,50 212,1110,54,72,3 308,1078,118,104 562,1122,46,60 630,1128,42,54 696,1124,64,56,5 768,1092,62,50 784,1150,46,32
    904,138,48,42,4 996,132,46,48,3 1126,130,44,50,5 1000,192,48,48,4 900,256,56,46,4 996,260,52,50,5 1120,260,50,46,1 906,324,44,44,1 1130,316,38,56,1 906,380,42,50,5 1002,382,42,46,2 1120,378,52,48,4 906,456,60,30 984,456,70,30 1120,452,62,30 1128,198,48,48,1
    906,564,48,62,1 968,548,50,60,2 1030,562,58,54,1 1104,562,40,52,5 1168,570,14,46`],
];
function footprint(x, y, w, h, n, i) {
  const X = x + w, Y = y + h, a = w * .42, b = h * .4, s = (i % 3 + 1) * w * .05;
  switch (n) {
    case 1: return `M${x + a} ${y}H${X}V${Y}H${x}V${y + b}H${x + a}Z`;
    case 2: return `M${x} ${y}H${X - a}V${y + b}H${X}V${Y}H${x}Z`;
    case 3: return `M${x} ${y}H${X}V${Y - b}H${X - a}V${Y}H${x}Z`;
    case 4: return `M${x} ${y}H${X}V${Y}H${X - a}V${Y - b}H${x}Z`;
    case 5: return `M${x + s} ${y}L${X} ${y + s}L${X - s} ${Y}L${x} ${Y - s}Z`;
    default: return `M${x} ${y}H${X}V${Y}H${x}Z`;
  }
}
houses.forEach(([x, y, list]) => {
  const p = document.createElementNS(NS, 'path');
  p.setAttribute('transform', tf(x, y));
  p.setAttribute('d', list.trim().split(/\s+/).map((s, i) => { const v = s.split(',').map(Number); return footprint(v[0], v[1], v[2], v[3], v[4], i); }).join(''));
  $('houses').append(p);
});
</script>
</body>
</html>
